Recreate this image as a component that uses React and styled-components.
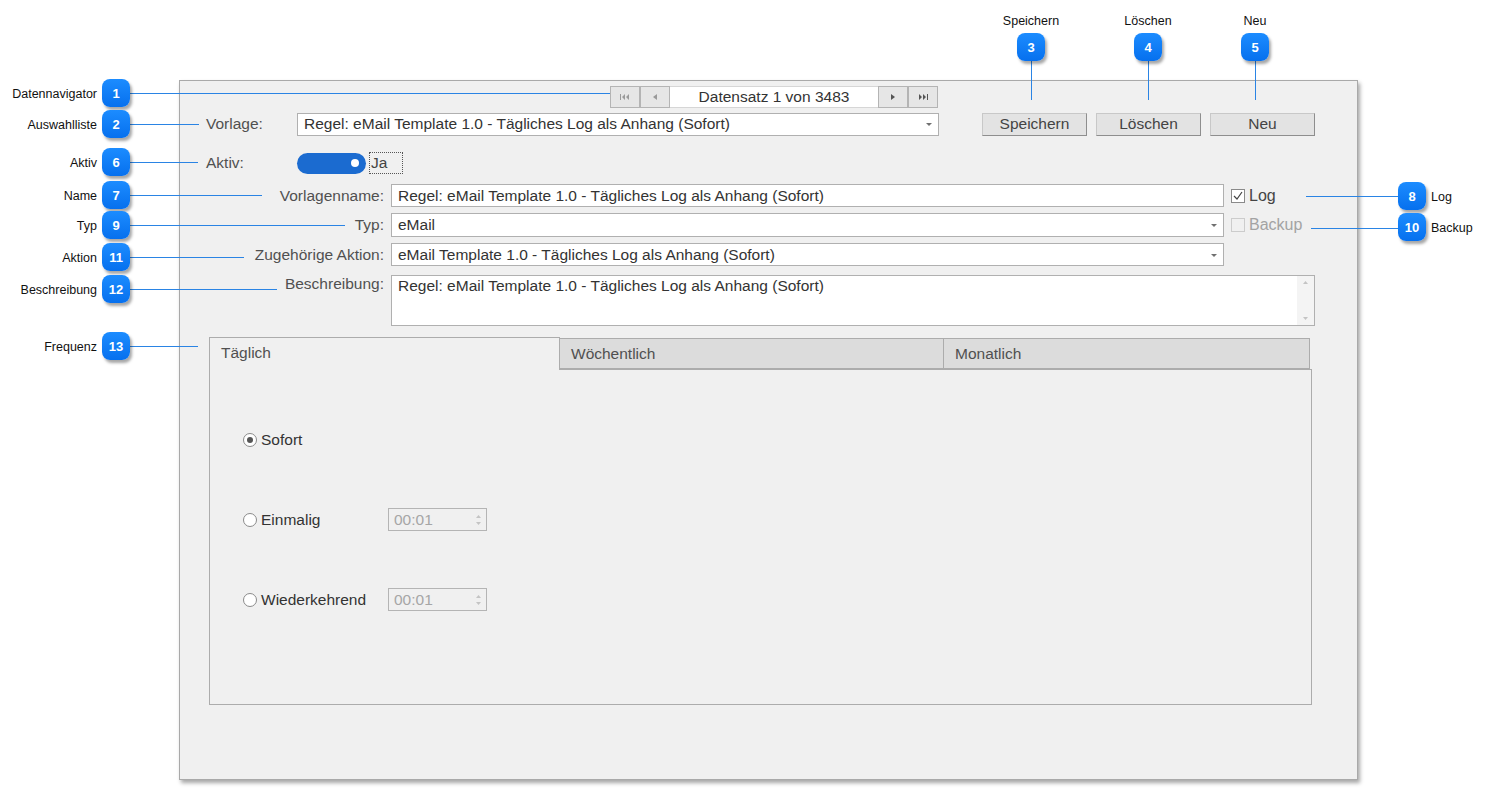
import React from "react";
import styled, { createGlobalStyle } from "styled-components";

const GlobalStyle = createGlobalStyle`
  html, body {
    margin: 0;
    padding: 0;
    background: #ffffff;
  }
  body {
    font-family: "Liberation Sans", Arial, sans-serif;
  }
`;

const Canvas = styled.div`
  position: relative;
  width: 1491px;
  height: 789px;
  box-sizing: border-box;
  padding: 80px 0 0 179px;
  overflow: hidden;
`;

const Panel = styled.div`
  width: 1179px;
  height: 700px;
  box-sizing: border-box;
  background: #f0f0f0;
  border: 1px solid #a9a9a9;
  box-shadow: 2px 3px 4px rgba(0, 0, 0, 0.35);
  padding-top: 5px;
  display: flex;
  flex-direction: column;
  color: #4a4a4a;
  font-size: 15.5px;
`;

const NavRow = styled.div`
  display: flex;
  height: 22px;
  margin-left: 430px;
  width: 328px;
`;

const NavButton = styled.div`
  width: 30px;
  height: 22px;
  box-sizing: border-box;
  background: #e6e6e6;
  border: 1px solid #b4b4b4;
  display: flex;
  align-items: center;
  justify-content: center;
`;

const NavText = styled.div`
  flex: 1;
  height: 22px;
  background: #ffffff;
  border-top: 1px solid #d6d6d6;
  border-bottom: 1px solid #d6d6d6;
  box-sizing: border-box;
  display: flex;
  align-items: center;
  justify-content: center;
  color: #333;
  font-size: 15.5px;
`;

const TopRow = styled.div`
  display: flex;
  align-items: center;
  margin-top: 5px;
  height: 22px;
`;

const PlainLabel = styled.div`
  width: 91px;
  padding-left: 26px;
  color: #505050;
`;

const SelectBox = styled.div`
  width: ${(p) => p.$w}px;
  height: ${(p) => p.$h || 23}px;
  box-sizing: border-box;
  background: #ffffff;
  border: 1px solid #b0b0b0;
  display: flex;
  align-items: center;
  padding: 0 0 0 6px;
  color: #333;
  position: relative;
  white-space: nowrap;
`;

const Caret = styled.span`
  position: absolute;
  right: 6px;
  top: 50%;
  margin-top: -1px;
  width: 0;
  height: 0;
  border-left: 3px solid transparent;
  border-right: 3px solid transparent;
  border-top: 3px solid #707070;
`;

const ButtonGroup = styled.div`
  display: flex;
  gap: 9px;
  margin-left: 43px;
`;

const ActionButton = styled.div`
  width: 105px;
  height: 23px;
  box-sizing: border-box;
  background: #e3e3e3;
  border: 1px solid #c8c8c8;
  border-right-color: #8e8e8e;
  border-bottom-color: #8e8e8e;
  display: flex;
  align-items: center;
  justify-content: center;
  color: #444;
`;

const AktivRow = styled.div`
  display: flex;
  align-items: center;
  margin-top: 17px;
  height: 22px;
`;

const Toggle = styled.div`
  width: 69px;
  height: 21px;
  border-radius: 11px;
  background: #1b6bd0;
  position: relative;
`;

const Knob = styled.span`
  position: absolute;
  right: 7px;
  top: 6px;
  width: 8px;
  height: 8px;
  border-radius: 50%;
  background: #ffffff;
`;

const FocusText = styled.div`
  margin-left: 3px;
  width: 34px;
  height: 22px;
  box-sizing: border-box;
  border: 1px dotted #555;
  display: flex;
  align-items: center;
  padding-left: 1px;
  color: #444;
`;

const FormGrid = styled.div`
  display: grid;
  grid-template-columns: 204px 833px 84px;
  column-gap: 7px;
  row-gap: 6px;
  margin-top: 10px;
  align-items: center;
`;

const FieldLabel = styled.div`
  text-align: right;
  color: #505050;
  align-self: ${(p) => (p.$top ? "start" : "center")};
  padding-top: ${(p) => (p.$top ? "3px" : "0")};
`;

const CheckRow = styled.div`
  display: flex;
  align-items: center;
  gap: 4px;
  color: ${(p) => (p.$disabled ? "#a3a3a3" : "#444")};
  font-size: 16px;
`;

const CheckBox = styled.span`
  width: 14px;
  height: 14px;
  box-sizing: border-box;
  background: ${(p) => (p.$disabled ? "#f0f0f0" : "#ffffff")};
  border: 1px solid ${(p) => (p.$disabled ? "#cccccc" : "#8a8a8a")};
  display: flex;
  align-items: center;
  justify-content: center;
`;

const TextArea = styled.div`
  grid-column: 2 / 4;
  height: 51px;
  margin-top: 3px;
  box-sizing: border-box;
  background: #ffffff;
  border: 1px solid #b0b0b0;
  display: flex;
  color: #333;
`;

const TextAreaBody = styled.div`
  flex: 1;
  padding: 1px 6px;
`;

const ScrollBar = styled.div`
  width: 17px;
  background: #f4f4f4;
  display: flex;
  flex-direction: column;
  justify-content: space-between;
  align-items: center;
  padding: 5px 0;
`;

const Tabs = styled.div`
  margin: 11px 0 0 29px;
  width: 1103px;
`;

const TabBar = styled.div`
  display: flex;
  height: 32px;
  align-items: flex-end;
  position: relative;
  z-index: 1;
`;

const Tab = styled.div`
  width: ${(p) => p.$w}px;
  height: ${(p) => (p.$active ? 33 : 31)}px;
  box-sizing: border-box;
  background: ${(p) => (p.$active ? "#f0f0f0" : "#dcdcdc")};
  border: 1px solid #acacac;
  border-bottom: ${(p) => (p.$active ? "none" : "1px solid #acacac")};
  margin-bottom: ${(p) => (p.$active ? "-1px" : "0")};
  border-left: ${(p) => (p.$first ? "1px solid #acacac" : "none")};
  padding: 6px 0 0 11px;
  color: #505050;
`;

const TabBody = styled.div`
  height: 336px;
  box-sizing: border-box;
  border: 1px solid #acacac;
  padding: 58px 0 0 33px;
  display: flex;
  flex-direction: column;
  gap: 57px;
`;

const RadioRow = styled.div`
  display: flex;
  align-items: center;
  height: 23px;
  color: #333;
`;

const Radio = styled.span`
  width: 14px;
  height: 14px;
  box-sizing: border-box;
  border-radius: 50%;
  background: #ffffff;
  border: 1px solid #8a8a8a;
  display: flex;
  align-items: center;
  justify-content: center;
  margin-right: 4px;

  &::after {
    content: "";
    width: 6px;
    height: 6px;
    border-radius: 50%;
    background: ${(p) => (p.$checked ? "#555" : "transparent")};
  }
`;

const RadioLabel = styled.span`
  width: 127px;
`;

const TimeInput = styled.div`
  width: 99px;
  height: 23px;
  box-sizing: border-box;
  border: 1px solid #b4b4b4;
  display: flex;
  align-items: center;
  justify-content: space-between;
  padding: 0 5px;
  color: #a6a6a6;
`;

const Spinner = styled.span`
  display: flex;
  flex-direction: column;
  gap: 4px;
`;

const Overlay = styled.svg`
  position: absolute;
  left: 0;
  top: 0;
  pointer-events: none;
`;

const Badge = styled.div`
  position: absolute;
  width: 28px;
  height: 28px;
  border-radius: 8px;
  background: linear-gradient(#1c8cff, #0670ee);
  box-shadow: 2px 3px 3px rgba(0, 0, 0, 0.35);
  color: #ffffff;
  font-weight: bold;
  font-size: 13px;
  display: flex;
  align-items: center;
  justify-content: center;
`;

const NoteLabel = styled.div`
  position: absolute;
  font-size: 12.5px;
  color: #111;
  white-space: nowrap;
  line-height: 14px;
`;

function Tri({ dir, color = "#9a9a9a" }) {
  const d = dir === "left" ? "M4 0 L0 3 L4 6 Z" : "M0 0 L4 3 L0 6 Z";
  return (
    <svg width="4" height="6" viewBox="0 0 4 6">
      <path d={d} fill={color} />
    </svg>
  );
}

function NavIcon({ kind }) {
  if (kind === "first") {
    return (
      <svg width="10" height="6" viewBox="0 0 10 6">
        <rect x="0" y="0" width="1" height="6" fill="#9a9a9a" />
        <path d="M5 0 L2 3 L5 6 Z M9 0 L6 3 L9 6 Z" fill="#9a9a9a" />
      </svg>
    );
  }
  if (kind === "last") {
    return (
      <svg width="10" height="6" viewBox="0 0 10 6">
        <path d="M1 0 L4 3 L1 6 Z M5 0 L8 3 L5 6 Z" fill="#555" />
        <rect x="9" y="0" width="1" height="6" fill="#555" />
      </svg>
    );
  }
  return <Tri dir={kind === "prev" ? "left" : "right"} color={kind === "prev" ? "#9a9a9a" : "#555"} />;
}

const SpinArrow = ({ up }) => (
  <svg width="5" height="3" viewBox="0 0 5 3">
    <path d={up ? "M0 3 L2.5 0 L5 3 Z" : "M0 0 L2.5 3 L5 0 Z"} fill="#c4c4c4" />
  </svg>
);

const callouts = [
  { n: 1, x: 116, y: 93, label: "Datennavigator", side: "left", to: [610, 93] },
  { n: 2, x: 116, y: 124, label: "Auswahlliste", side: "left", to: [199, 124] },
  { n: 6, x: 116, y: 162, label: "Aktiv", side: "left", to: [198, 162] },
  { n: 7, x: 116, y: 195, label: "Name", side: "left", to: [262, 195] },
  { n: 9, x: 116, y: 225, label: "Typ", side: "left", to: [345, 225] },
  { n: 11, x: 116, y: 257, label: "Aktion", side: "left", to: [244, 257] },
  { n: 12, x: 116, y: 289, label: "Beschreibung", side: "left", to: [277, 289] },
  { n: 13, x: 116, y: 346, label: "Frequenz", side: "left", to: [198, 346] },
  { n: 3, x: 1031, y: 47, label: "Speichern", side: "top", to: [1031, 100] },
  { n: 4, x: 1148, y: 47, label: "Löschen", side: "top", to: [1148, 100] },
  { n: 5, x: 1255, y: 47, label: "Neu", side: "top", to: [1255, 100] },
  { n: 8, x: 1412, y: 196, label: "Log", side: "right", to: [1306, 196] },
  { n: 10, x: 1412, y: 227, label: "Backup", side: "right", to: [1311, 228] },
];

function leaderStart(c) {
  if (c.side === "left") return [c.x + 14, c.y];
  if (c.side === "top") return [c.x, c.y + 14];
  return [c.x - 14, c.to[1]];
}

function labelStyle(c) {
  if (c.side === "left") return { right: 1491 - 97, top: c.y - 6, textAlign: "right" };
  if (c.side === "top") return { left: c.x - 50, width: 100, top: 14, textAlign: "center" };
  return { left: 1431, top: c.y - 6 };
}

function Callouts() {
  return (
    <>
      <Overlay width="1491" height="789">
        {callouts.map((c) => {
          const [x1, y1] = leaderStart(c);
          return (
            <line
              key={c.n}
              x1={x1}
              y1={y1}
              x2={c.to[0]}
              y2={c.to[1]}
              stroke="#2a84e4"
              strokeWidth="1"
              shapeRendering="crispEdges"
            />
          );
        })}
      </Overlay>
      {callouts.map((c) => (
        <React.Fragment key={c.n}>
          <Badge style={{ left: c.x - 14, top: c.y - 14 }}>{c.n}</Badge>
          <NoteLabel style={labelStyle(c)}>{c.label}</NoteLabel>
        </React.Fragment>
      ))}
    </>
  );
}

export default function App() {
  const desc = "Regel: eMail Template 1.0 - Tägliches Log als Anhang (Sofort)";
  return (
    <>
      <GlobalStyle />
      <Canvas>
        <Panel>
          <NavRow>
            <NavButton><NavIcon kind="first" /></NavButton>
            <NavButton><NavIcon kind="prev" /></NavButton>
            <NavText>Datensatz 1 von 3483</NavText>
            <NavButton><NavIcon kind="next" /></NavButton>
            <NavButton><NavIcon kind="last" /></NavButton>
          </NavRow>

          <TopRow>
            <PlainLabel>Vorlage:</PlainLabel>
            <SelectBox $w={642}>
              {desc}
              <Caret />
            </SelectBox>
            <ButtonGroup>
              <ActionButton>Speichern</ActionButton>
              <ActionButton>Löschen</ActionButton>
              <ActionButton>Neu</ActionButton>
            </ButtonGroup>
          </TopRow>

          <AktivRow>
            <PlainLabel>Aktiv:</PlainLabel>
            <Toggle><Knob /></Toggle>
            <FocusText>Ja</FocusText>
          </AktivRow>

          <FormGrid>
            <FieldLabel>Vorlagenname:</FieldLabel>
            <SelectBox $w={833}>{desc}</SelectBox>
            <CheckRow>
              <CheckBox>
                <svg width="10" height="9" viewBox="0 0 10 9">
                  <path d="M1 5 L4 8 L9 1" stroke="#444" strokeWidth="1.2" fill="none" />
                </svg>
              </CheckBox>
              Log
            </CheckRow>

            <FieldLabel>Typ:</FieldLabel>
            <SelectBox $w={833} $h={24}>
              eMail
              <Caret />
            </SelectBox>
            <CheckRow $disabled>
              <CheckBox $disabled />
              Backup
            </CheckRow>

            <FieldLabel>Zugehörige Aktion:</FieldLabel>
            <SelectBox $w={833}>
              eMail Template 1.0 - Tägliches Log als Anhang (Sofort)
              <Caret />
            </SelectBox>
            <div />

            <FieldLabel $top>Beschreibung:</FieldLabel>
            <TextArea>
              <TextAreaBody>{desc}</TextAreaBody>
              <ScrollBar>
                <SpinArrow up />
                <SpinArrow />
              </ScrollBar>
            </TextArea>
          </FormGrid>

          <Tabs>
            <TabBar>
              <Tab $w={351} $active $first>Täglich</Tab>
              <Tab $w={384}>Wöchentlich</Tab>
              <Tab $w={366}>Monatlich</Tab>
            </TabBar>
            <TabBody>
              <RadioRow>
                <Radio $checked />
                <RadioLabel>Sofort</RadioLabel>
              </RadioRow>
              <RadioRow>
                <Radio />
                <RadioLabel>Einmalig</RadioLabel>
                <TimeInput>
                  00:01
                  <Spinner><SpinArrow up /><SpinArrow /></Spinner>
                </TimeInput>
              </RadioRow>
              <RadioRow>
                <Radio />
                <RadioLabel>Wiederkehrend</RadioLabel>
                <TimeInput>
                  00:01
                  <Spinner><SpinArrow up /><SpinArrow /></Spinner>
                </TimeInput>
              </RadioRow>
            </TabBody>
          </Tabs>
        </Panel>
        <Callouts />
      </Canvas>
    </>
  );
}
